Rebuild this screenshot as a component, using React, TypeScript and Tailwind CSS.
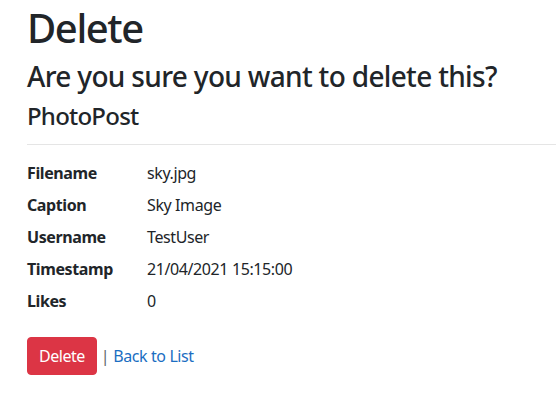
const FIELDS: { label: string; value: string }[] = [
  { label: 'Filename', value: 'sky.jpg' },
  { label: 'Caption', value: 'Sky Image' },
  { label: 'Username', value: 'TestUser' },
  { label: 'Timestamp', value: '21/04/2021 15:15:00' },
  { label: 'Likes', value: '0' },
]

export default function App() {
  return (
    <div
      className="min-h-screen bg-white pl-[27px] pt-[2px] text-[16px] leading-[1.5] tracking-[-0.025em] text-[#212529]"
      style={{ fontFamily: '"Segoe UI", "Noto Sans", "Open Sans", sans-serif' }}
    >
      <h1 className="mb-2 pt-[2px] text-[40px] font-medium leading-[1.2] tracking-[-0.035em]">Delete</h1>
      <h3 className="mb-2 text-[28px] font-medium leading-[1.2] tracking-[-0.024em]">
        Are you sure you want to delete this?
      </h3>
      <div>
        <h4 className="text-[24px] font-medium leading-[1.2] tracking-[-0.032em]">PhotoPost</h4>
        <hr className="mb-4 mt-[14px] border-t border-black/10" />
        <dl className="mb-4 grid grid-cols-[120px_1fr]">
          {FIELDS.map(f => (
            <div key={f.label} className="contents">
              <dt className="mb-2 font-bold">{f.label}</dt>
              <dd className="mb-2">{f.value}</dd>
            </div>
          ))}
        </dl>
        <form className="flex items-center">
          <button
            type="button"
            className="rounded-[4px] border border-[#dc3545] bg-[#dc3545] px-[11px] py-1.5 tracking-[-0.03em] text-white"
          >
            Delete
          </button>
          <span className="ml-[4px] mr-[4px] text-[#5f6468]">|</span>
          <a href="#" className="text-[#1b6ec2]">Back to List</a>
        </form>
      </div>
    </div>
  )
}
